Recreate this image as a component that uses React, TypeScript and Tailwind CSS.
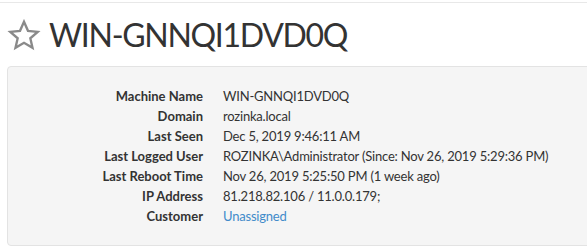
const rows: { label: string; value: string; link?: boolean }[] = [
  { label: 'Machine Name', value: 'WIN-GNNQI1DVD0Q' },
  { label: 'Domain', value: 'rozinka.local' },
  { label: 'Last Seen', value: 'Dec 5, 2019 9:46:11 AM' },
  { label: 'Last Logged User', value: 'ROZINKA\\Administrator (Since: Nov 26, 2019 5:29:36 PM)' },
  { label: 'Last Reboot Time', value: 'Nov 26, 2019 5:25:50 PM (1 week ago)' },
  { label: 'IP Address', value: '81.218.82.106 / 11.0.0.179;' },
  { label: 'Customer', value: 'Unassigned', link: true },
];

export default function App() {
  return (
    <div className="w-[587px] h-[252px] overflow-hidden bg-white text-[#333] font-['Lato','Noto_Sans',sans-serif]">
      <div className="mt-[2px] h-px bg-[#e8e8e8]" />
      <div className="flex items-center gap-[8px] pl-[7px] pt-[16px] h-[48px]">
        <svg width="34" height="33" viewBox="0 0 24 24" fill="none" stroke="#8a8a8a" strokeWidth="1.7" strokeLinejoin="miter">
          <polygon points="12,2 14.9,8.6 22,9.3 16.6,14 18.2,21 12,17.3 5.8,21 7.4,14 2,9.3 9.1,8.6" />
        </svg>
        <h1 className="text-[32px] leading-none tracking-[-1.3px] text-[#333]">WIN-GNNQI1DVD0Q</h1>
      </div>
      <div className="ml-[7px] mt-[15px] -mr-[6px] h-[180px] rounded-[4px] border border-[#e3e3e3] bg-[#f5f5f5] pt-[19px]">
        <div className="grid grid-cols-[195px_1fr] gap-x-[20px] text-[13px] leading-[20px]">
          {rows.map((r) => (
            <div key={r.label} className="contents">
              <div className="text-right font-bold text-[#333]">{r.label}</div>
              <div className={r.link ? 'text-[#428bca] tracking-[-0.2px]' : 'text-[#333] tracking-[-0.2px]'}>{r.value}</div>
            </div>
          ))}
        </div>
      </div>
    </div>
  );
}
